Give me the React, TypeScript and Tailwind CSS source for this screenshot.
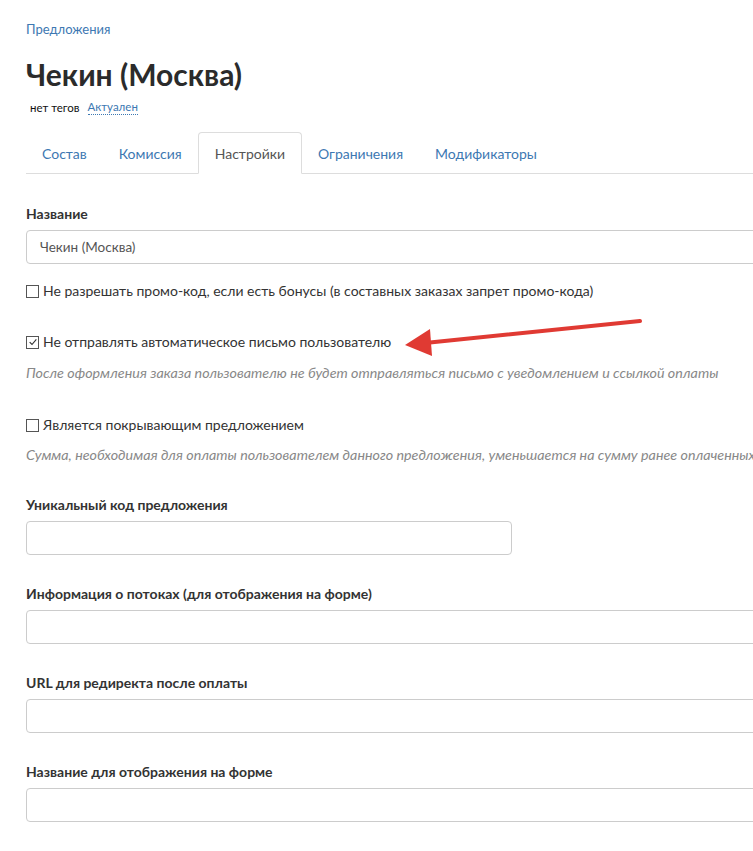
import React from "react";

const font = { fontFamily: "Lato, 'Open Sans', Arial, sans-serif" };

function Field({ label, wide = true, value }: { label: string; wide?: boolean; value?: string }) {
  return (
    <div className="flex flex-col">
      <div className="text-[14px] font-bold leading-[16px] text-[#333]">{label}</div>
      <div
        className={`mt-[8px] flex h-[34px] items-center rounded-[4px] border border-[#ccc] bg-white px-[13px] text-[13.5px] text-[#555] ${
          wide ? "w-[760px]" : "w-[486px]"
        }`}
      >
        {value}
      </div>
    </div>
  );
}

function Check({ checked, label }: { checked?: boolean; label: string }) {
  return (
    <label className="flex items-center gap-[4px] text-[14px] leading-[16px] text-[#333]">
      <span className="flex h-[13px] w-[13px] items-center justify-center border border-[#555] bg-white">
        {checked && (
          <svg viewBox="0 0 12 12" className="h-[10px] w-[10px]">
            <path d="M2 6.2 L4.8 9 L10 2.8" fill="none" stroke="#333" strokeWidth="1.4" />
          </svg>
        )}
      </span>
      {label}
    </label>
  );
}

const tabs = ["Состав", "Комиссия", "Настройки", "Ограничения", "Модификаторы"];

export default function App() {
  return (
    <div className="relative h-[851px] w-[753px] overflow-hidden bg-white" style={font}>
      <div className="w-[800px] pl-[26px] pt-[16px]">
        <a className="text-[13px] leading-[18px] text-[#3d78b2]">Предложения</a>
        <h1 className="mt-[17px] text-[30px] font-bold leading-[34px] text-[#2b2b2b]">Чекин (Москва)</h1>
        <div className="mt-[9px] flex items-center gap-[8px] pl-[4px] text-[11.5px] leading-[14px]">
          <span className="text-[#111]">нет тегов</span>
          <span className="border-b border-dotted border-[#3d78b2] text-[#3d78b2]">Актуален</span>
        </div>

        <div className="mt-[17px] flex border-b border-[#ddd]">
          {tabs.map((t) => (
            <div
              key={t}
              className={
                t === "Настройки"
                  ? "-mb-px rounded-t-[4px] border border-b-white border-[#ddd] bg-white px-[16px] pb-[11px] pt-[12px] text-[14px] leading-[17px] text-[#555]"
                  : "px-[16px] pb-[11px] pt-[13px] text-[14px] leading-[17px] text-[#3d78b2]"
              }
            >
              {t}
            </div>
          ))}
        </div>

        <div className="mt-[32px] flex flex-col">
          <Field label="Название" value="Чекин (Москва)" />
          <div className="mt-[19px]">
            <Check label="Не разрешать промо-код, если есть бонусы (в составных заказах запрет промо-кода)" />
          </div>
          <div className="mt-[35px]">
            <Check checked label="Не отправлять автоматическое письмо пользователю" />
          </div>
          <div className="mt-[15px] text-[14.3px] italic leading-[16px] text-[#888]">
            После оформления заказа пользователю не будет отправляться письмо с уведомлением и ссылкой оплаты
          </div>
          <div className="mt-[36px]">
            <Check label="Является покрывающим предложением" />
          </div>
          <div className="mt-[14px] whitespace-nowrap text-[14.3px] italic leading-[16px] text-[#888]">
            Сумма, необходимая для оплаты пользователем данного предложения, уменьшается на сумму ранее оплаченных
          </div>
          <div className="mt-[34px]">
            <Field label="Уникальный код предложения" wide={false} />
          </div>
          <div className="mt-[31px]">
            <Field label="Информация о потоках (для отображения на форме)" />
          </div>
          <div className="mt-[31px]">
            <Field label="URL для редиректа после оплаты" />
          </div>
          <div className="mt-[31px]">
            <Field label="Название для отображения на форме" />
          </div>
        </div>
      </div>

      <svg className="pointer-events-none absolute left-0 top-0" width="753" height="851">
        <line x1="640" y1="321" x2="425" y2="343" stroke="#e03a33" strokeWidth="4" strokeLinecap="round" />
        <polygon points="405,345 430,329 432,356" fill="#e03a33" />
      </svg>
    </div>
  );
}
